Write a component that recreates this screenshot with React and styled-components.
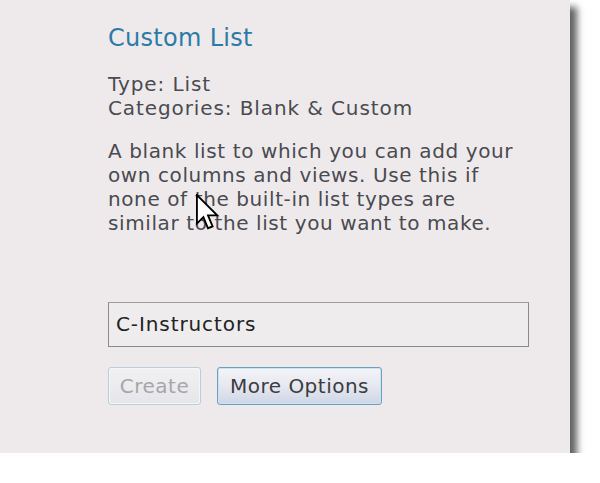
import React from "react";
import styled, { createGlobalStyle } from "styled-components";

const Global = createGlobalStyle`
  html, body { margin: 0; padding: 0; background: #ffffff; }
  body { font-family: "DejaVu Sans", Verdana, sans-serif; }
`;

const Panel = styled.div`
  position: relative;
  width: 570px;
  height: 453px;
  box-sizing: border-box;
  background: #eeeaec;
  box-shadow: 7px 7px 7px rgba(0, 0, 0, 0.62);
  padding: 23px 0 0 108px;
  display: flex;
  flex-direction: column;
  align-items: flex-start;
`;

const Title = styled.h2`
  margin: 0;
  font-size: 24px;
  font-weight: normal;
  letter-spacing: 0.3px;
  color: #2b7ba6;
  line-height: 30px;
`;

const Meta = styled.div`
  margin-top: 19px;
  font-size: 20px;
  letter-spacing: 0.9px;
  line-height: 24px;
  color: #4a4a50;
`;

const Desc = styled.p`
  margin: 19px 0 0;
  width: 418px;
  font-size: 20px;
  letter-spacing: 0.6px;
  line-height: 24px;
  color: #4a4a50;
`;

const Input = styled.input`
  margin-top: 67px;
  width: 421px;
  height: 45px;
  box-sizing: border-box;
  border: 1px solid #8a8a8e;
  border-top-color: #9a9aa2;
  background: #efecee;
  font-family: "DejaVu Sans", Verdana, sans-serif;
  font-size: 20px;
  letter-spacing: 0.9px;
  color: #222;
  padding: 0 0 1px 7px;
  outline: none;
`;

const Buttons = styled.div`
  display: flex;
  gap: 16px;
  margin-top: 20px;
`;

const Button = styled.button`
  height: 38px;
  width: ${(p) => p.$w}px;
  box-sizing: border-box;
  padding: 0;
  border-radius: 3px;
  font-family: "DejaVu Sans", Verdana, sans-serif;
  font-size: 20px;
  letter-spacing: 0.5px;
  border: 1px solid ${(p) => (p.$disabled ? "#b6cfdc" : "#6f9fbf")};
  color: ${(p) => (p.$disabled ? "#a6a6aa" : "#3c3c40")};
  background: ${(p) =>
    p.$disabled
      ? "linear-gradient(#f1f0f2, #e6e6ea)"
      : "linear-gradient(#f4f4f8 0%, #e6e8f0 50%, #cdd6e6 100%)"};
  box-shadow: ${(p) =>
    p.$disabled ? "inset 0 0 0 1px #f4f6f8" : "inset 0 0 0 1px #c9e4f4"};
`;

const Cursor = styled.svg`
  position: absolute;
  left: 196px;
  top: 194px;
`;

export default function App() {
  return (
    <>
      <Global />
      <Panel>
        <Title>Custom List</Title>
        <Meta>
          Type: List
          <br />
          Categories: Blank &amp; Custom
        </Meta>
        <Desc>
          A blank list to which you can add your own columns and views. Use this if none of the
          built-in list types are similar to the list you want to make.
        </Desc>
        <Input defaultValue="C-Instructors" />
        <Buttons>
          <Button $disabled $w={93}>Create</Button>
          <Button $w={165}>More Options</Button>
        </Buttons>
        <Cursor width="24" height="38" viewBox="0 0 13 20.5">
          <path
            d="M0.5 0.5 L0.5 16 L4 12.5 L6.5 18.5 L9 17.5 L6.5 11.5 L11.5 11.5 Z"
            fill="#ffffff"
            stroke="#000000"
            strokeWidth="1"
            strokeLinejoin="miter"
          />
        </Cursor>
      </Panel>
    </>
  );
}
